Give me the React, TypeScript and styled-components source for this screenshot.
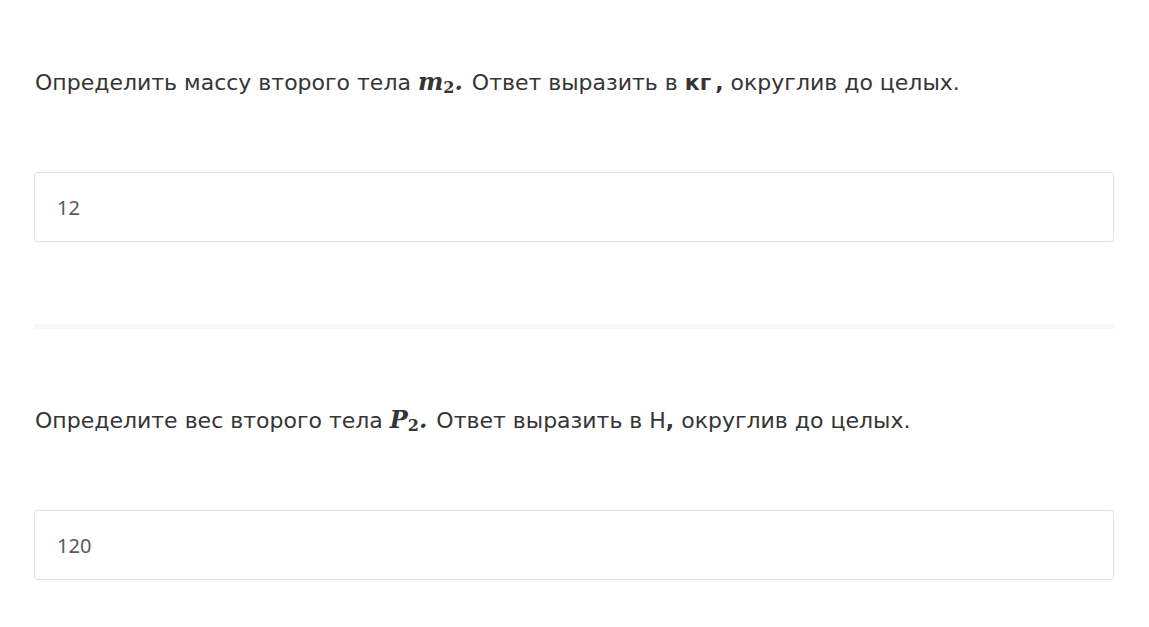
import React from "react";
import styled, { createGlobalStyle } from "styled-components";

const GlobalStyle = createGlobalStyle`
    body {
        margin: 0;
        background: #ffffff;
        font-family: "DejaVu Sans", "Noto Sans", sans-serif;
    }
`
const Page = styled.div`
    padding: 0 35px 0 34px;
`
const Question = styled.section`
    padding-top: 64px;
    padding-bottom: 66px;
`
const Text = styled.p`
    margin: 0 0 66px 1px;
    font-size: 22px;
    line-height: 36px;
    color: #353535;
`
const MathVar = styled.span`
    font-family: "DejaVu Serif", "Liberation Serif", serif;
    font-style: italic;
    font-weight: bold;
    font-size: 24px;
    margin: 0 2px 0 7px;
`
const Sub = styled.sub`
    font-style: normal;
    font-size: 16px;
    vertical-align: -3px;
`
const Unit = styled.span<{ $bold?: boolean }>`
    font-weight: ${p => (p.$bold ? 700 : 500)};
`
const Comma = styled.span<{ $gap?: boolean }>`
    font-weight: 700;
    margin-left: ${p => (p.$gap ? "4px" : "0")};
`
const Answer = styled.div`
    box-sizing: border-box;
    height: 70px;
    border: 1px solid #e4e4e4;
    border-radius: 3px;
    padding: 0 22px;
    display: flex;
    align-items: center;
    font-family: "Noto Sans", sans-serif;
    font-size: 20px;
    color: #5a5a5a;
`
const Divider = styled.hr`
    margin: 16px 0 9px;
    border: none;
    height: 5px;
    background: #f7f7fd;
`

interface Props {
    before: string;
    symbol: string;
    after: string;
    unit: string;
    boldUnit?: boolean;
    value: string;
}

const Task = ({ before, symbol, after, unit, boldUnit, value }: Props) => (
    <Question>
        <Text>
            {before}
            <MathVar>{symbol}<Sub>2</Sub>.</MathVar>
            {after}
            <Unit $bold={boldUnit}>{unit}</Unit><Comma $gap={boldUnit}>,</Comma> округлив до целых.
        </Text>
        <Answer>{value}</Answer>
    </Question>
)

export default function App() {
    return (
        <Page>
            <GlobalStyle />
            <Task before="Определить массу второго тела" symbol="m" after=" Ответ выразить в " unit="кг" boldUnit value="12" />
            <Divider />
            <Task before="Определите вес второго тела" symbol="P" after=" Ответ выразить в " unit="Н" value="120" />
        </Page>
    )
}
